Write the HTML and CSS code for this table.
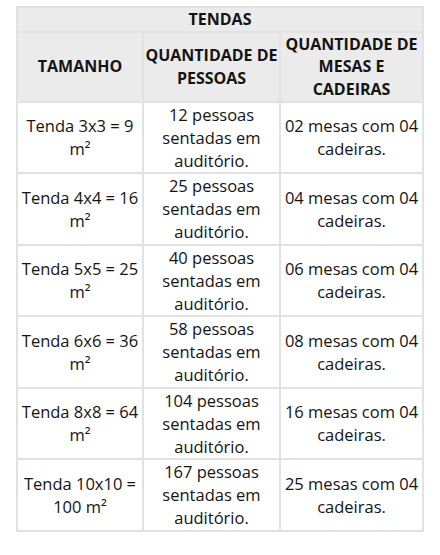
FILE: index.html
```html
<!DOCTYPE html>
<html lang="pt">
<head>
<meta charset="utf-8">
<link rel="stylesheet" href="styles.css">
</head>
<body>
<table class="tbl">
  <colgroup>
    <col class="c1"><col class="c2"><col class="c3">
  </colgroup>
  <thead>
    <tr><th colspan="3" class="title">TENDAS</th></tr>
    <tr class="heads">
      <th>TAMANHO</th>
      <th>QUANTIDADE DE PESSOAS</th>
      <th>QUANTIDADE DE MESAS E CADEIRAS</th>
    </tr>
  </thead>
  <tbody>
    <tr><td>Tenda 3x3 = 9 m²</td><td>12 pessoas sentadas em auditório.</td><td>02 mesas com 04 cadeiras.</td></tr>
    <tr><td>Tenda 4x4 = 16 m²</td><td>25 pessoas sentadas em auditório.</td><td>04 mesas com 04 cadeiras.</td></tr>
    <tr><td>Tenda 5x5 = 25 m²</td><td>40 pessoas sentadas em auditório.</td><td>06 mesas com 04 cadeiras.</td></tr>
    <tr><td>Tenda 6x6 = 36 m²</td><td>58 pessoas sentadas em auditório.</td><td>08 mesas com 04 cadeiras.</td></tr>
    <tr><td>Tenda 8x8 = 64 m²</td><td>104 pessoas sentadas em auditório.</td><td>16 mesas com 04 cadeiras.</td></tr>
    <tr><td>Tenda 10x10 = 100 m²</td><td>167 pessoas sentadas em auditório.</td><td>25 mesas com 04 cadeiras.</td></tr>
  </tbody>
</table>
</body>
</html>
```
FILE: styles.css
```css
html, body {
  margin: 0;
  padding: 0;
  background: #ffffff;
}
body {
  padding: 6px 0 0 16px;
  font-family: "Open Sans", "Noto Sans", sans-serif;
  color: #141414;
}
.tbl {
  border-collapse: collapse;
  table-layout: fixed;
  width: 406px;
}
.c1 { width: 126px; }
.c2 { width: 137px; }
.c3 { width: 143px; }
.tbl th, .tbl td {
  border: 2px solid #e2e2e2;
  text-align: center;
  vertical-align: middle;
  padding: 0;
}
.tbl th {
  background: #ebebeb;
  font-weight: 700;
  font-size: 16px;
  line-height: 22.5px;
  color: #141414;
}
.title {
  height: 22px;
}
.heads th {
  height: 68px;
}
.tbl td {
  font-size: 16.5px;
  line-height: 23px;
  height: 69.5px;
  padding: 0 3px;
}
```
